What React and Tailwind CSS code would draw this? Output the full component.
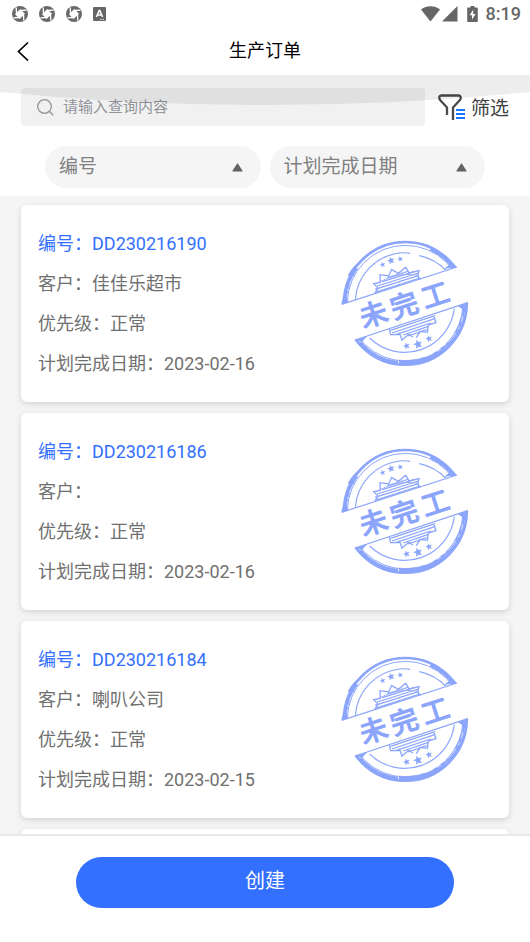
import React from 'react';

const orders = [
  { id: 'DD230216190', customer: '佳佳乐超市', priority: '正常', due: '2023-02-16' },
  { id: 'DD230216186', customer: '', priority: '正常', due: '2023-02-16' },
  { id: 'DD230216184', customer: '喇叭公司', priority: '正常', due: '2023-02-15' },
];

function SwirlIcon() {
  return (
    <svg className="size-4" viewBox="0 0 16 16" aria-hidden="true">
      <circle cx="8" cy="8" r="8" fill="#6a6a6a" />
      <path d="M8.300 3 13 7.700 7.700 13 3 8.300Z" fill="#fff" />
      <path d="M4.500 7.500 4.200 1.500M8.500 4.500 14.500 4.200M11.500 8.500 11.800 14.500M7.500 11.500 1.500 11.800" stroke="#fff" strokeWidth="1.300" fill="none" />
    </svg>
  );
}

function StatusBar() {
  return (
    <div className="flex h-[27px] items-center justify-between pr-[9px] pl-3 text-[#666]">
      <div className="flex items-center gap-[11px]">
        <SwirlIcon />
        <SwirlIcon />
        <SwirlIcon />
        <svg className="h-[14px] w-[13px]" viewBox="0 0 13 14" aria-hidden="true">
          <rect width="13" height="14" rx="1" fill="#666" />
          <path d="M3.4 10 6.2 3.6h.6L9.6 10M4.6 8h3.8" stroke="#fff" strokeWidth="1.5" fill="none" />
          <path d="M7 12.4h4.5" stroke="#fff" strokeWidth=".8" strokeDasharray="1 .5" />
        </svg>
      </div>
      <div className="flex items-center">
        <svg className="h-4 w-[37px]" viewBox="0 0 37 16" aria-hidden="true">
          <path d="M0 3.4C5.6-.9 13.4-.9 19 3.4L9.5 15.4Z" fill="#666" />
          <path d="M36.500 0V15.500H21Z" fill="#666" />
        </svg>
        <svg className="ml-[9px] h-4 w-[11px]" viewBox="0 0 11 16" aria-hidden="true">
          <path d="M3.500 0h4v1.500H10a.8.8 0 0 1 .8.8v12.900a.8.8 0 0 1-.8.8H1a.8.8 0 0 1-.8-.8V2.300A.8.8 0 0 1 1 1.500h2.500Z" fill="#666" />
          <path d="M6.200 3.800 2.600 9.300h2.400v4.100L8.600 8H6.200Z" fill="#fff" />
        </svg>
        <span className="ml-2 text-[18px] leading-5 font-medium">8:19</span>
      </div>
    </div>
  );
}

function FilterIcon() {
  return (
    <svg className="h-[27px] w-[27px]" viewBox="0 0 27 27" fill="none" aria-hidden="true">
      <path
        d="M9 21V13.500L2.300 6.200C.6 4.300 1 1.500 3.300 1.500H20.700C23 1.500 23.400 4.300 21.700 6.200L15 13.500V26"
        stroke="#4a4a4a"
        strokeWidth="2.300"
        strokeLinejoin="round"
      />
      <path d="M18 16h9M18 20h9M18 24h9" stroke="#1677ff" strokeWidth="2.200" />
    </svg>
  );
}

function SortSelect({ label }) {
  return (
    <div className="relative min-w-0 flex-1">
      <select
        aria-label={label}
        className="h-[42px] w-full appearance-none rounded-full bg-[#f5f5f5] pr-10 pl-[14px] text-[19px] text-[#808080] outline-none"
      >
        <option>{label}</option>
      </select>
      <svg className="pointer-events-none absolute top-[17px] right-[18px] h-[9px] w-[11px]" viewBox="0 0 11 9" aria-hidden="true">
        <path d="M5.500 1 10 8H1Z" fill="#606266" stroke="#606266" strokeWidth="1.200" strokeLinejoin="round" />
      </svg>
    </div>
  );
}

const STAR = 'M0-10 2.600-3.400 9.500-3.100 4.100 1.300 5.900 8.100 0 4.300-5.900 8.100-4.100 1.300-9.500-3.100-2.600-3.400Z';

function Stamp() {
  const clip = React.useId();
  return (
    <svg className="size-32 shrink-0" viewBox="36 32 384 384" role="img" aria-label="未完工">
      <defs>
        <clipPath id={clip + 'u'}>
          <path d="M30 20H430V98L36 225Z" />
        </clipPath>
        <clipPath id={clip + 'l'}>
          <path d="M76 332 420 219V420H60Z" />
        </clipPath>
      </defs>
      <g fill="none" stroke="#8ba5fb">
        <g clipPath={`url(#${clip}u)`}>
          <circle cx="229" cy="222" r="184" strokeWidth="8" />
          <circle cx="229" cy="222" r="174" strokeWidth="3" />
          <path d="M49 224C49 183 60 148 84 118" strokeWidth="8" />
          <path d="M60 140C65 128 76 115 86 106" strokeWidth="7" />
          <path d="M53 213C53 181 64 150 86 122" strokeWidth="1.500" stroke="#fff" strokeDasharray="19 9 7 13 28 6" />
          <path d="M304 60C330 72 354 91 373 114" strokeWidth="8" />
          <path d="M79 212A150 150 0 0 1 212 71" strokeWidth="3.500" />
          <path d="M210 71Q226 69 243 72M271 79Q318 88 354 126" strokeWidth="3.500" />
        </g>
        <path d="M38 225 384 113" strokeWidth="3.500" />
        <path d="M345 119 384 114 366 101Z" fill="#8ba5fb" stroke="none" />
        <path d="M37 225 55 218 53 194 43 198Z" fill="#8ba5fb" stroke="none" />
        <path d="M138 192 147 176 134 163 154 159 153 136 179 140 188 120 208 132 230 114 240 131 270 124 266 140 274 151" strokeWidth="4" />
        <path d="M147 160 Q205 128 264 137" strokeWidth="2.500" />
        <path d="M145 170 268 131M138 180 270 138M138 189 272 146M160 157 258 126M176 145 240 125" strokeWidth="3.500" />

        <g clipPath={`url(#${clip}l)`}>
          <circle cx="229" cy="222" r="184" strokeWidth="8" />
          <circle cx="229" cy="222" r="173" strokeWidth="3" />
          <path d="M405 225C406 280 379 331 335 361" strokeWidth="8" />
          <path d="M402 260C394 300 370 333 339 353" stroke="#fff" strokeWidth="2" strokeDasharray="18 15 9 13 38 6" />
          <path d="M347 357C310 388 260 401 210 398" strokeWidth="13" />
          <path d="M338 358C300 383 258 394 206 390" stroke="#fff" strokeWidth="2" strokeDasharray="15 13 27 14" />
          <path d="M94 339C123 374 163 394 207 399" strokeWidth="9" />
          <path d="M122 326A150 150 0 0 0 376 238" strokeWidth="3.500" />
        </g>
        <path d="M78 332 416 220" strokeWidth="3.500" />
        <path d="M78 332 115 321 98 338ZM387 231 417 219 413 248Z" fill="#8ba5fb" stroke="none" />
        <path d="M181 300 185 316 213 315 219 332 239 315 252 323M262 325 273 306 295 309 298 287 321 280 315 262" strokeWidth="4" />
        <path d="M184 303 318 259M189 311 317 268M200 316 305 281M222 317 298 291M236 320 293 301" strokeWidth="3.500" />
      </g>
      <g fill="#8ba5fb">
        <path d={STAR} transform="translate(161 106) rotate(-18) scale(.9)" />
        <path d={STAR} transform="translate(186 94) rotate(-18) scale(1.200)" />
        <path d={STAR} transform="translate(214 89) rotate(-18) scale(.9)" />
        <path d={STAR} transform="translate(233 350) rotate(-18) scale(1.100)" />
        <path d={STAR} transform="translate(267 345) rotate(-18) scale(1.500)" />
        <path d={STAR} transform="translate(300 328) rotate(-18) scale(1.100)" />
        <g
          fontFamily="'Noto Sans CJK SC', sans-serif"
          fontWeight="400"
          fontSize="82"
          textAnchor="middle"
          stroke="#8ba5fb"
          strokeWidth="4"
        >
          <text transform="translate(133 254) rotate(-18)" y="31">未</text>
          <text transform="translate(225 227) rotate(-18)" y="31">完</text>
          <text transform="translate(318 196) rotate(-18)" y="31">工</text>
        </g>
      </g>
    </svg>
  );
}

const CARD = 'rounded-md bg-white shadow-[0_2px_6px_rgba(0,0,0,0.14)]';

function OrderCard({ order }) {
  return (
    <li className={`${CARD} flex items-center justify-between pt-[19px] pr-10 pb-[18px] pl-[17px]`}>
      <div className="text-[18px] leading-10 whitespace-nowrap text-[#707070]">
        <p className="text-[#3370ff]">编号：{order.id}</p>
        <p>客户：{order.customer}</p>
        <p>优先级：{order.priority}</p>
        <p>计划完成日期：{order.due}</p>
      </div>
      <Stamp />
    </li>
  );
}

export default function App() {
  return (
    <div className="flex h-screen flex-col overflow-hidden bg-[#f5f5f5] font-[Roboto,'Noto_Sans_CJK_SC',sans-serif]">
      <header className="bg-white">
        <StatusBar />
        <div className="grid h-12 grid-cols-[60px_1fr_60px] items-center">
          <button type="button" aria-label="返回" className="pl-[17px]">
            <svg className="h-5 w-3" viewBox="0 0 12 20" fill="none" aria-hidden="true">
              <path d="M11 1.500 1.500 10.500 11 19.500" stroke="#000" strokeWidth="1.700" />
            </svg>
          </button>
          <h1 className="text-center text-[18px] leading-7 text-black">生产订单</h1>
        </div>
      </header>

      <section className="relative bg-white pt-[13px] pb-2">
        <div className="flex items-center pr-[21px] pl-[21px]">
          <label className="flex h-[38px] min-w-0 flex-1 items-center rounded bg-[#f1f1f1] pl-4">
            <svg className="size-[17px] shrink-0" viewBox="0 0 17 17" fill="none" stroke="#909399" strokeWidth="1.300" aria-hidden="true">
              <circle cx="7.500" cy="7.500" r="6.800" />
              <path d="m12.300 12.300 4 4" />
            </svg>
            <input
              type="search"
              aria-label="请输入查询内容"
              placeholder="请输入查询内容"
              className="ml-[9px] min-w-0 flex-1 bg-transparent text-[15px] outline-none placeholder:text-[#909399]"
            />
          </label>
          <button type="button" className="ml-[13px] flex items-center gap-[6px] text-[19px] text-[#404040]">
            <FilterIcon />
            <span className="pt-1 leading-7">筛选</span>
          </button>
        </div>
        <div className="mt-5 flex gap-[9px] px-[45px]">
          <SortSelect label="编号" />
          <SortSelect label="计划完成日期" />
        </div>
        <svg
          className="pointer-events-none absolute inset-x-0 top-0 h-[30px] w-full"
          viewBox="0 0 530 30"
          preserveAspectRatio="none"
          aria-hidden="true"
        >
          <path d="M0 0H530V17Q398 30 265 30Q132 30 0 17Z" fill="#000" fillOpacity=".07" />
        </svg>
      </section>

      <main className="min-h-0 flex-1 overflow-hidden px-[21px] pt-[9px]">
        <ul className="flex flex-col gap-[11px]">
          {orders.map((order) => (
            <OrderCard key={order.id} order={order} />
          ))}
          <li aria-hidden="true" className={`${CARD} h-12`} />
        </ul>
      </main>

      <footer className="border-t-2 border-[#e8e8e8] bg-white px-[76px] pt-[21px] pb-[34px]">
        <button type="button" className="h-[51px] w-full rounded-full bg-[#3370ff] pb-1 text-[20px] text-white">
          创建
        </button>
      </footer>
    </div>
  );
}
